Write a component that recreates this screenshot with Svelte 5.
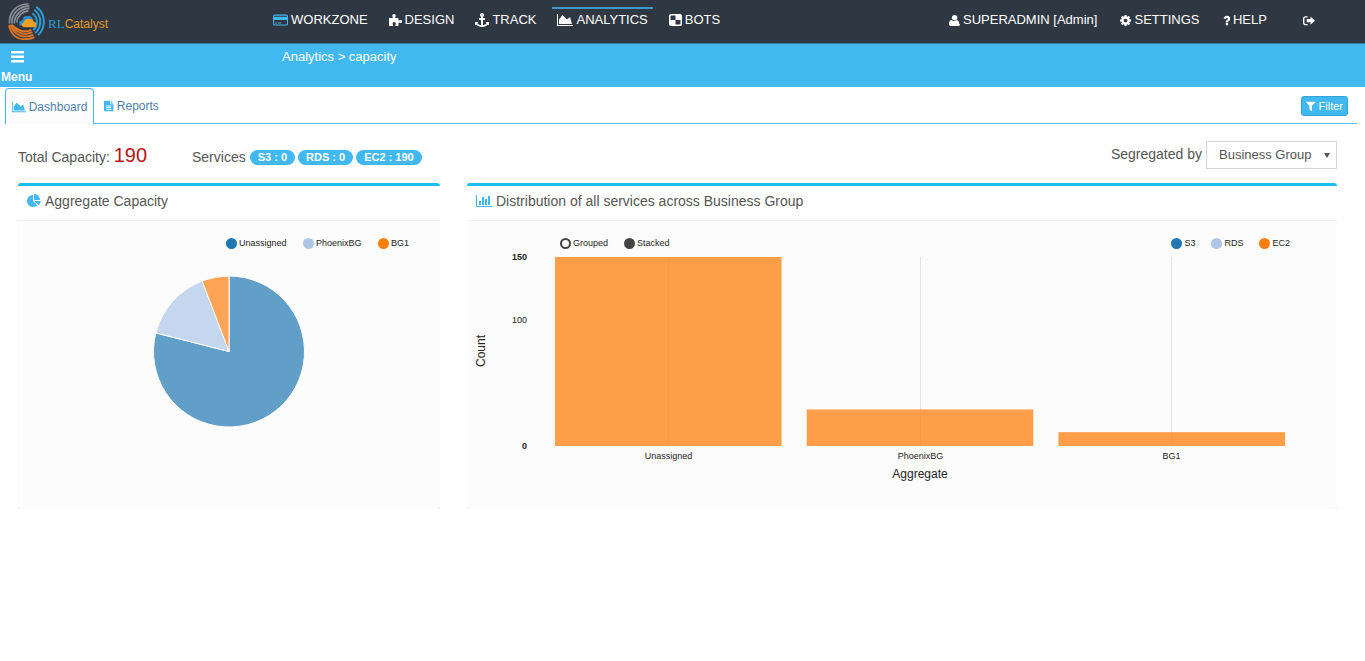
<script>
  const I = {
    area: { box: '0 0 2048 1792', d: 'M2048 1536v128h-2048v-1536h128v1408h1920zm-384-1024l256 896h-1664v-576l448-576 576 576z' },
    bar: { box: '0 0 2048 1792', d: 'M640 896v512h-256v-512h256zm384-512v1024h-256v-1024h256zm1024 1152v128h-2048v-1536h128v1408h1920zm-640-896v768h-256v-768h256zm384-384v1152h-256v-1152h256z' },
    pie: { box: '0 0 1792 1792', d: 'M768 890l546 546q-106 108-247.500 168t-298.500 60q-209 0-385.500-103t-279.500-279.500-103-385.500 103-385.500 279.500-279.500 385.500-103v762zm187 6h773q0 157-60 298.500t-168 247.500zm709-128h-768v-768q209 0 385.500 103t279.500 279.500 103 385.500z' },
    user: { box: '128 0 1536 1792', d: 'M1664 1405q0 120-73 189.500t-194 69.500h-1002q-121 0-194-69.500t-73-189.500q0-53 3.500-103.500t14-109 26.500-108.500 43-97.500 62-81 85.500-53.500 111.500-20q9 0 42 21.500t74.500 48 108 48 133.500 21.500 133.500-21.500 108-48 74.500-48 42-21.500q61 0 111.500 20t85.500 53.500 62 81 43 97.500 26.500 108.500 14 109 3.500 103.500zm-384-893q0 159-112.500 271.500t-271.500 112.500-271.500-112.500-112.500-271.500 112.500-271.500 271.500-112.500 271.500 112.500 112.500 271.500z' },
    cog: { box: '128 0 1536 1792', d: 'M1152 896q0-106-75-181t-181-75-181 75-75 181 75 181 181 75 181-75 75-181zm512-109v222q0 12-8 23t-20 13l-185 28q-19 54-39 91 35 50 107 138 10 12 10 25t-9 23q-27 37-99 108t-94 71q-12 0-26-9l-138-108q-44 23-91 38-16 136-29 186-7 28-36 28h-222q-14 0-24.500-8.500t-11.500-21.500l-28-184q-49-16-90-37l-141 107q-10 9-25 9-14 0-25-11-126-114-165-168-7-10-7-23 0-12 8-23 15-21 51-66.500t54-70.500q-27-50-41-99l-183-27q-13-2-21-12.500t-8-23.500v-222q0-12 8-23t19-13l186-28q14-46 39-92-40-57-107-138-10-12-10-24 0-10 9-23 26-36 98.500-107.500t94.500-71.500q13 0 26 10l138 107q44-23 91-38 16-136 29-186 7-28 36-28h222q14 0 24.500 8.500t11.500 21.500l28 184q49 16 90 37l142-107q9-9 24-9 13 0 25 10 129 119 165 170 7 8 7 22 0 12-8 23-15 21-51 66.500t-54 70.500q26 50 41 98l183 28q13 2 21 12.500t8 23.500z' },
    help: { box: '384 0 1024 1792', d: 'M1088 1256v240q0 16-12 28t-28 12h-240q-16 0-28-12t-12-28v-240q0-16 12-28t28-12h240q16 0 28 12t12 28zm316-600q0 54-15.500 101t-35 76.500-55 59.500-57.500 43.500-61 35.500q-41 23-68.500 65t-27.500 67q0 17-12 32.500t-28 15.500h-240q-15 0-25.500-18.500t-10.500-37.500v-45q0-83 65-156.500t143-108.500q59-27 84-56t25-76q0-42-46.500-74t-107.500-32q-65 0-108 29-35 25-107 115-13 16-31 16-12 0-25-8l-164-125q-13-10-15.500-25t5.500-28q160-266 464-266 80 0 161 31t146 83 106 127.500 41 158.500z' },
    anchor: { box: '0 0 1792 1792', d: 'M960 256q0-26-19-45t-45-19-45 19-19 45 19 45 45 19 45-19 19-45zm832 928v352q0 22-20 30-8 2-12 2-12 0-23-9l-93-93q-119 143-318.500 226.500t-429.500 83.500-429.500-83.500-318.500-226.500l-93 93q-9 9-23 9-4 0-12-2-20-8-20-30v-352q0-14 9-23t23-9h352q22 0 30 20 8 19-7 35l-100 100q67 91 189.500 153.500t271.500 82.500v-647h-192q-26 0-45-19t-19-45v-128q0-26 19-45t45-19h192v-163q-58-34-93-92.500t-35-128.500q0-106 75-181t181-75 181 75 75 181q0 70-35 128.500t-93 92.500v163h192q26 0 45 19t19 45v128q0 26-19 45t-45 19h-192v647q149-20 271.500-82.500t189.500-153.500l-100-100q-15-16-7-35 8-20 30-20h352q14 0 23 9t9 23z' },
    filter: { box: '192 0 1408 1792', d: 'M1595 295q17 41-14 70l-493 493v742q0 42-39 59-13 5-25 5-27 0-45-19l-256-256q-19-19-19-45v-486l-493-493q-31-29-14-70 17-39 59-39h1280q42 0 59 39z' },
    card: { box: '0 0 15 14', d: 'M1.500 1.500h12q1.500 0 1.500 1.500v8q0 1.500-1.500 1.500h-12q-1.500 0-1.500-1.500v-8q0-1.500 1.500-1.500zM1 2.800v1h13v-1zM1 7v4.500h13v-4.500zM2 9.500h2v1h-2zM5 9.500h3v1h-3z' },
    puzzle: { box: '0 0 13 14', d: 'M0 5h3.600q.5-.6 0-1.300-.6-1-.1-1.900.5-.8 1.500-.8t1.500.8q.5.900-.1 1.900-.5.700 0 1.300h3v2.300q.6.500 1.300 0 1-.6 1.800-.1.500.5.500 1.300t-.5 1.300q-.8.500-1.800-.1-.7-.5-1.300 0v3.300h-2.900q-.5-.6 0-1.300.6-1 .1-1.900-.5-.7-1.400-.7t-1.400.7q-.5.900.1 1.900.5.700 0 1.300h-3.900z' },
    bots: { box: '0 0 13 14', d: 'M2 1h9q2 0 2 2v8q0 2-2 2h-9q-2 0-2-2v-8q0-2 2-2zM2.500 2.500q-1 0-1 1v3.500h5v-4.500zM6.500 7v4.500h4q1 0 1-1v-3.500z' },
    out: { box: '0 0 13 14', d: 'M5 2.500v1.300h-2q-1.500 0-1.500 1.500v4q0 1.500 1.500 1.500h2v1.200h-2.200q-2.800 0-2.800-2.800v-4q0-2.700 2.800-2.700zM8 2.700l5 4.500-5 4.500v-2.700h-4v-3.600h4z' },
    file: { box: '0 0 11 14', d: 'M1 1h6v4h4v7.500q0 .5-.5.500h-9.500q-1 0-1-1v-10q0-1 1-1zM8 1l3 3h-3zM2.500 6.500v1h6v-1zM2.500 8.500v1h6v-1zM2.500 10.500v1h6v-1z' },
    menu: { box: '0 0 13 14', d: 'M0 1h13v2.500h-13zM0 5.500h13v2.500h-13zM0 10h13v2.500h-13z' }
  };

  const mainNav = [
    { label: 'WORKZONE', icon: 'card', tint: true },
    { label: 'DESIGN', icon: 'puzzle' },
    { label: 'TRACK', icon: 'anchor' },
    { label: 'ANALYTICS', icon: 'area', active: true },
    { label: 'BOTS', icon: 'bots' }
  ];
  const services = [['S3', 0], ['RDS', 0], ['EC2', 190]];
  const groups = [
    { name: 'Unassigned', value: 150, color: '#1f77b4' },
    { name: 'PhoenixBG', value: 29, color: '#aec7e8' },
    { name: 'BG1', value: 11, color: '#ff7f0e' }
  ];
  const series = [
    { name: 'S3', color: '#1f77b4' },
    { name: 'RDS', color: '#aec7e8' },
    { name: 'EC2', color: '#ff7f0e' }
  ];
  const ticks = [0, 100, 150];
  const total = groups.reduce((s, g) => s + g.value, 0);

  const R = 75.5;
  let acc = 0;
  const slices = groups.map((g) => {
    const a = (acc / total) * 2 * Math.PI;
    acc += g.value;
    const b = (acc / total) * 2 * Math.PI;
    const pt = (t) => `${R * Math.sin(t)} ${-R * Math.cos(t)}`;
    return { color: g.color, d: `M0 0L${pt(a)}A${R} ${R} 0 ${b - a > Math.PI ? 1 : 0} 1 ${pt(b)}Z` };
  });

  let mode = $state('Stacked');
  let pieWidth = $state(422);
  let barWidth = $state(870);
  const left = 88;
  const base = 197;
  const plotHeight = 189;
  const plotWidth = $derived(barWidth - left - 52);
  const step = $derived(plotWidth / 2.9);
  const y = (v) => base - (v / 150) * plotHeight;
</script>

{#snippet icon(name)}
  <svg class="icon" viewBox={I[name].box} aria-hidden="true"><path fill-rule="evenodd" d={I[name].d} /></svg>
{/snippet}

<header class="topbar">
  <a class="brand" href="#home">
    <svg viewBox="0 0 38 38" aria-hidden="true" fill="none">
      <g stroke="#8b9299" stroke-width="1.700">
        <path d="M1.500 21C1 9 9 1 21 1" /><path d="M4 21C3.500 11 11 3.500 22 3" />
        <path d="M6.500 21C6.500 13 13 6 22 5.300" /><path d="M9 20C9.500 14 14 9 21 7.800" />
      </g>
      <g stroke="#2b9fd8" stroke-width="2">
        <path d="M29 4C39 11 39 25 31 33" /><path d="M27 7C35 13 35 24 28 31" /><path d="M25 10.500C31 15 31 23 26 28" />
      </g>
      <g stroke="#d87424" stroke-width="2">
        <path d="M1 23C3 33 10 38 19 37Q24 37 27 35" /><path d="M2 22.500C6 31 12 35 19 34.300Q23 34.300 26 32.500" />
        <path d="M3 22.500C8 29 12 32 18 31.600Q22 31.500 25 30" /><path d="M4 22.500C9 27 13 29.500 18 29Q21 29 24 27.500" />
      </g>
      <path fill="#2b8fd0" d="M12 23Q10 18 15 18Q15 13 20 13.500Q25 13 26 18L20 19L16 23Z" />
      <path fill="#f0a020" d="M16 25Q12 22 16 20Q18 15 23 16.500Q26 17 26.500 19Q31 21 28 25Z" />
    </svg>
    <span class="brand-name"><span class="rl">RL</span>Catalyst</span>
  </a>
  <nav class="main-nav" aria-label="Main">
    {#each mainNav as item}
      <a href="#{item.label.toLowerCase()}" class:active={item.active} class:tint={item.tint}>{@render icon(item.icon)}{item.label}</a>
    {/each}
  </nav>
  <nav class="user-nav" aria-label="Account">
    <a href="#user">{@render icon('user')}SUPERADMIN [Admin]</a>
    <a href="#settings">{@render icon('cog')}SETTINGS</a>
    <a href="#help">{@render icon('help')}HELP</a>
    <a class="logout" href="#logout" aria-label="Sign out">{@render icon('out')}</a>
  </nav>
</header>

<div class="subbar">
  <button class="menu" type="button">{@render icon('menu')}<span>Menu</span></button>
  <div class="crumbs">Analytics &gt; capacity</div>
</div>

<main>
  <div class="tabs">
    <a class="tab current" href="#dashboard">{@render icon('area')}Dashboard</a>
    <a class="tab" href="#reports">{@render icon('file')}Reports</a>
    <button class="filter" type="button">{@render icon('filter')}Filter</button>
  </div>

  <div class="summary">
    <div class="total">Total Capacity: <span>{total}</span></div>
    <div class="services">
      Services
      <div class="badges">
        {#each services as [name, count]}<span class="badge">{name} : {count}</span>{/each}
      </div>
    </div>
    <div class="segregate">
      <label for="segregated">Segregated by</label>
      <div class="select">
        <select id="segregated"><option>Business Group</option></select>
      </div>
    </div>
  </div>

  <div class="panels">
    <section class="panel">
      <h2>{@render icon('pie')}Aggregate Capacity</h2>
      <div class="body" bind:clientWidth={pieWidth}>
        <div class="legends pie-legends">
          <div class="legend">
            {#each groups as g}<span class="key"><i style="background: {g.color}"></i>{g.name}</span>{/each}
          </div>
        </div>
        <svg class="chart" role="img" aria-label="Aggregate capacity by business group">
          <g transform="translate({pieWidth / 2} 102.5)" fill-opacity="0.7" stroke="#fff">
            {#each slices as s}<path d={s.d} fill={s.color} />{/each}
          </g>
        </svg>
      </div>
    </section>

    <section class="panel">
      <h2>{@render icon('bar')}Distribution of all services across Business Group</h2>
      <div class="body" bind:clientWidth={barWidth}>
        <div class="legends bar-legends">
          <div class="legend">
            {#each ['Grouped', 'Stacked'] as m}
              <label class="key"><input type="radio" name="mode" value={m} bind:group={mode} />{m}</label>
            {/each}
          </div>
          <div class="legend">
            {#each series as s}<span class="key"><i style="background: {s.color}"></i>{s.name}</span>{/each}
          </div>
        </div>
        <svg class="chart" role="img" aria-label="Count by business group">
          {#each ticks as t}
            <text class="tick" class:edge={t !== 100} x="60" y={y(t) + 3} text-anchor="end">{t}</text>
          {/each}
          {#each groups as g, i}
            {@const x = left + i * step}
            {@const mid = Math.floor(x + step * 0.45) + 0.5}
            <line x1={mid} x2={mid} y1={y(150)} y2={base} stroke="#e5e5e5" />
            <rect {x} y={y(g.value)} width={step * 0.9} height={base - y(g.value)} fill="#ff7f0e" fill-opacity="0.75" />
            <text class="tick" x={mid} y={base + 13} text-anchor="middle">{g.name}</text>
          {/each}
          <text class="axis" x={left + plotWidth / 2} y="229" text-anchor="middle">Aggregate</text>
          <text class="axis" transform="translate(18 102) rotate(-90)" text-anchor="middle">Count</text>
        </svg>
      </div>
    </section>
  </div>
</main>

<style>
  :global(body) {
    margin: 0;
    background: #fff;
    color: #555;
    font: 14px/20px "Liberation Sans", Arial, sans-serif;
  }
  a { color: inherit; text-decoration: none; }
  button { border: 0; font: inherit; cursor: pointer; }
  .icon { height: 14px; fill: currentColor; flex: none; }

  .topbar {
    display: grid;
    grid-template-columns: 268px 1fr auto;
    box-sizing: border-box;
    height: 44px;
    background: #2f3742;
    border-bottom: 1px solid #38779a;
    color: #fff;
    font-size: 13px;
  }
  .brand { display: flex; align-items: center; gap: 3px; padding-left: 8px; }
  .brand svg { width: 37px; height: 37px; }
  .brand-name { padding-top: 4px; font-size: 12px; color: #e59a1c; }
  .rl { font: 13px/20px "Liberation Serif", serif; color: #2e9bd0; }
  .main-nav, .user-nav { display: flex; align-items: flex-start; padding-top: 7px; }
  .main-nav { gap: 11px; }
  .topbar nav a {
    display: flex;
    align-items: center;
    gap: 3px;
    height: 22px;
    padding: 0 5px;
    border-top: 2px solid transparent;
    white-space: nowrap;
  }
  .topbar nav a.active { border-color: #3b9ccb; }
  .tint .icon { color: #41b8f0; }
  .user-nav { gap: 13px; padding-right: 45px; }
  .user-nav .icon { height: 13px; }
  .topbar nav .logout { padding-left: 18px; }

  .subbar {
    display: grid;
    grid-template-columns: 282px 1fr;
    height: 43px;
    background: #41b8f0;
    color: #fff;
  }
  .menu {
    display: flex;
    flex-direction: column;
    align-items: flex-start;
    justify-content: flex-start;
    gap: 5px;
    padding: 6px 0 0 1px;
    background: none;
    color: #fff;
    font-size: 12px;
    font-weight: bold;
    line-height: 16px;
  }
  .menu .icon { margin-left: 10px; }
  .crumbs { padding-top: 3px; font-size: 13px; }

  .tabs {
    display: flex;
    align-items: flex-start;
    gap: 3px;
    margin: 1px 8px 0 5px;
    height: 35px;
    border-bottom: 1px solid #5cc0f2;
    font-size: 12px;
    color: #4f81ad;
  }
  .tab {
    display: flex;
    align-items: center;
    gap: 3px;
    height: 34px;
    padding: 0 6px;
    border: 1px solid transparent;
    border-bottom: 0;
    border-radius: 4px 4px 0 0;
  }
  .tab .icon { height: 12px; color: #41b8f0; }
  .tab.current { border-color: #41b8f0; background: #fcfcfc; height: 35px; }
  .filter {
    display: flex;
    align-items: center;
    gap: 3px;
    height: 20px;
    margin: 8px 9px 0 auto;
    padding: 0 4px;
    border: 1px solid #2ea4dc;
    border-radius: 3px;
    background: #41b8f0;
    color: #fff;
    font-size: 11px;
  }
  .filter .icon { height: 12px; }

  .summary { display: flex; padding: 17px 28px 0 18px; height: 42px; }
  .total { width: 174px; line-height: 28px; }
  .total span { font-size: 20px; color: #b81414; }
  .services { display: flex; align-items: center; gap: 4px; height: 32px; }
  .badges { display: flex; gap: 3px; }
  .badge {
    padding: 0 8px;
    border-radius: 8px;
    background: #41b8f0;
    color: #fff;
    font-size: 11px;
    font-weight: bold;
    line-height: 15px;
  }
  .segregate { display: flex; gap: 4px; margin-left: auto; line-height: 26px; }
  .select { position: relative; height: 28px; }
  .select::after {
    content: "";
    position: absolute;
    right: 7px;
    top: 12px;
    border: 3px solid transparent;
    border-top: 5px solid #555;
    border-bottom: 0;
    pointer-events: none;
  }
  select {
    appearance: none;
    width: 131px;
    height: 28px;
    padding: 0 12px;
    border: 1px solid #d5d5d5;
    border-radius: 0;
    background: #fff;
    color: #555;
    font: 13px/20px "Liberation Sans", Arial, sans-serif;
  }

  .panels {
    display: grid;
    grid-template-columns: 422fr 870fr;
    gap: 27px;
    padding: 0 28px 0 18px;
  }
  .panel {
    min-width: 0;
    border-top: 3px solid #1cc0f0;
    border-radius: 3px;
    box-shadow: 0 1px 1px rgba(0, 0, 0, 0.1);
    background: #fcfcfc;
  }
  h2 {
    display: flex;
    align-items: center;
    gap: 4px;
    height: 30px;
    margin: 0;
    padding: 0 9px 4px;
    border-bottom: 1px solid #f0f0f0;
    background: #fff;
    font-size: 14px;
    font-weight: normal;
  }
  h2 .icon { color: #41b8f0; }
  .body { padding-top: 16px; }
  .legends { display: flex; justify-content: space-between; height: 12px; font-size: 9px; line-height: 12px; color: #222; }
  .legend { display: flex; gap: 16px; }
  .pie-legends { justify-content: flex-end; padding-right: 31px; }
  .pie-legends .legend { display: grid; grid-template-columns: 61px 59px auto; }
  .bar-legends { padding: 0 47px 0 93px; }
  .key { display: flex; align-items: center; gap: 2px; }
  .key i { width: 11px; height: 11px; border-radius: 50%; }
  .key input {
    appearance: none;
    box-sizing: border-box;
    width: 11px;
    height: 11px;
    margin: 0;
    border: 2px solid #444;
    border-radius: 50%;
    background: #fff;
  }
  .key input:checked { background: #444; }
  .chart { display: block; width: 100%; height: 260px; }
  .tick { font-size: 9px; fill: #222; }
  .edge { font-weight: bold; }
  .axis { font-size: 12px; fill: #222; }
</style>
